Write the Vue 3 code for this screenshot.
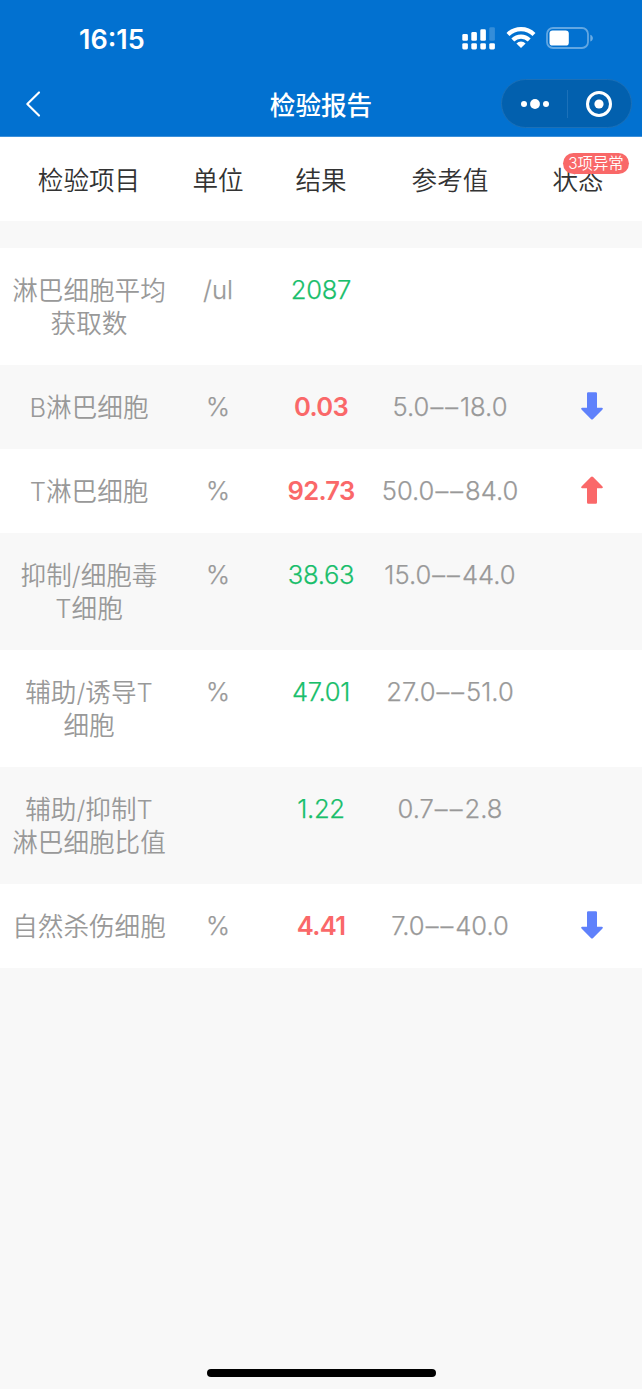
<template>
  <div class="page">
    <header class="top">
      <div class="status-bar">
        <span class="time">16:15</span>
        <div class="status-icons">
          <svg class="signal" width="34" height="24" viewBox="0 0 34 24" fill="#fff">
            <rect x="0.3" y="8" width="5.6" height="6.8" rx="1.4" />
            <rect x="9.3" y="6" width="5.6" height="8.8" rx="1.4" />
            <rect x="18.3" y="3.3" width="5.6" height="11.5" rx="1.4" />
            <rect x="27.3" y="1.2" width="5.6" height="13.6" rx="1.4" opacity="0.2" />
            <rect
              v-for="n in 4"
              :key="n"
              :x="(n - 1) * 9 + 0.3"
              y="17.2"
              width="5.6"
              height="6.2"
              rx="1.4"
            />
          </svg>
          <svg class="wifi" width="30" height="22" viewBox="0 0 30 22" fill="none" stroke="#fff" stroke-width="4.2">
            <path d="M2 8.4a18.6 18.6 0 0 1 26 0" />
            <path d="M6.8 13.9a11.8 11.8 0 0 1 16.4 0" />
            <path d="M15 22l-4.6-4.6a6.4 6.4 0 0 1 9.2 0z" fill="#fff" stroke="none" />
          </svg>
          <svg class="battery" width="48" height="23" viewBox="0 0 48 23">
            <rect x="1" y="1" width="41" height="20" rx="6" fill="none" stroke="#fff" stroke-opacity="0.38" stroke-width="1.8" />
            <rect x="3.5" y="3.4" width="19.3" height="15.2" rx="3.2" fill="#fff" />
            <path d="M44.3 7.7c3.4 1.2 3.4 5.6 0 6.8z" fill="#fff" opacity="0.42" />
          </svg>
        </div>
      </div>
      <div class="nav-bar">
        <svg class="back" width="16" height="28" viewBox="0 0 16 28" fill="none" stroke="#fff" stroke-width="2.1" stroke-linecap="round" stroke-linejoin="round">
          <path d="M14 2.4L2.3 14L14 25.6" />
        </svg>
        <h1 class="title">检验报告</h1>
        <div class="capsule">
          <svg width="30" height="12" viewBox="0 0 30 12" fill="#fff">
            <circle cx="4" cy="6" r="3" />
            <circle cx="15" cy="6" r="4.9" />
            <circle cx="26" cy="6" r="3" />
          </svg>
          <span class="divider"></span>
          <svg width="28" height="28" viewBox="0 0 28 28">
            <circle cx="14" cy="14" r="11.5" fill="none" stroke="#fff" stroke-width="3" />
            <circle cx="14" cy="14" r="4.6" fill="#fff" />
          </svg>
        </div>
      </div>
    </header>

    <div class="row head">
      <div>检验项目</div>
      <div>单位</div>
      <div>结果</div>
      <div>参考值</div>
      <div class="state-head">
        状态
        <span class="badge">3项异常</span>
      </div>
    </div>

    <div class="list">
      <div v-for="item in items" :key="item.name" class="row">
        <div class="name">{{ item.name }}</div>
        <div class="value">{{ item.unit }}</div>
        <div class="value result" :class="{ abnormal: item.state }">{{ item.result }}</div>
        <div class="value">
          <template v-if="item.low">{{ item.low }}<span class="dash">––</span>{{ item.high }}</template>
        </div>
        <div class="state">
          <svg
            v-if="item.state"
            class="arrow"
            :class="item.state"
            width="24"
            height="28"
            viewBox="0 0 24 28"
          >
            <path d="M8.2 .3h7.6q1.2 0 1.2 1.2V15.7h4.9q1.7 0.2.6 1.7L13.1 27q-1.1 1-2.2 0L1.5 17.4q-1.1-1.5.6-1.7H7V1.5Q7 .3 8.2 .3z" />
          </svg>
        </div>
      </div>
    </div>

    <div class="home-indicator"></div>
  </div>
</template>

<script setup>
import { ref } from 'vue'

const items = ref([
  { name: '淋巴细胞平均获取数', unit: '/ul', result: '2087', low: '', high: '', state: '' },
  { name: 'B淋巴细胞', unit: '%', result: '0.03', low: '5.0', high: '18.0', state: 'down' },
  { name: 'T淋巴细胞', unit: '%', result: '92.73', low: '50.0', high: '84.0', state: 'up' },
  { name: '抑制/细胞毒\nT细胞', unit: '%', result: '38.63', low: '15.0', high: '44.0', state: '' },
  { name: '辅助/诱导T\n细胞', unit: '%', result: '47.01', low: '27.0', high: '51.0', state: '' },
  { name: '辅助/抑制T\n淋巴细胞比值', unit: '', result: '1.22', low: '0.7', high: '2.8', state: '' },
  { name: '自然杀伤细胞', unit: '%', result: '4.41', low: '7.0', high: '40.0', state: 'down' }
])
</script>

<style>
body {
  background: #f8f8f8;
}
</style>

<style scoped>
.page {
  display: flex;
  flex-direction: column;
  box-sizing: border-box;
  height: 1389px;
  padding-bottom: 12px;
  background: #f8f8f8;
  font-family: Inter, "Noto Sans CJK SC", sans-serif;
  font-size: 25.6px;
  font-weight: 350;
  line-height: 33px;
}

.top {
  box-sizing: border-box;
  height: 137px;
  background: #0271d0;
  border-bottom: 1px solid #3c90da;
  color: #fff;
}

.status-bar {
  display: flex;
  justify-content: space-between;
  height: 72px;
  padding: 0 48px 0 79px;
}

.time {
  padding-top: 23px;
  font-size: 27px;
  font-weight: 600;
}

.status-icons {
  display: flex;
  align-items: flex-start;
  padding-top: 26px;
}

.wifi {
  margin-left: 10px;
}

.battery {
  margin: 1px 0 0 10px;
}

.nav-bar {
  display: grid;
  grid-template-columns: 1fr auto 1fr;
  align-items: center;
  height: 63px;
  padding: 0 10px 0 25px;
}

.title {
  margin: 3px 15px 0 0;
  font-size: 25.6px;
  font-weight: 500;
}

.capsule {
  display: flex;
  align-items: center;
  justify-content: space-between;
  justify-self: end;
  box-sizing: border-box;
  width: 131px;
  height: 49px;
  padding: 0 18px;
  background: #0260ae;
  border: 1px solid #1c70b7;
  border-radius: 25px;
}

.divider {
  width: 1px;
  height: 28px;
  background: #1c71b9;
}

.row {
  display: grid;
  grid-template-columns: 154px 104px 102px 156px 100px;
  padding: 25.48px 12px;
  background: #fff;
  color: #999;
  text-align: center;
}

.head {
  margin-bottom: 27px;
  padding-top: 26.5px;
  padding-bottom: 24.5px;
  color: #333;
}

.state-head {
  position: relative;
}

.badge {
  position: absolute;
  top: -11px;
  left: 35px;
  width: 66px;
  height: 21px;
  border-radius: 11px;
  background: #f96868;
  color: #fff;
  font-size: 15.4px;
  line-height: 22px;
  white-space: nowrap;
}

.list .row:nth-child(even) {
  background: #f8f8f8;
}

.name {
  position: relative;
  top: 1px;
  white-space: pre-line;
}

.value {
  -webkit-text-stroke: 0.25px currentColor;
}

.result {
  color: #19be6b;
  letter-spacing: -0.3px;
}

.abnormal {
  color: #fa6869;
  font-weight: 600;
  letter-spacing: -0.7px;
  -webkit-text-stroke: 0;
}

.dash {
  margin-left: 1px;
  letter-spacing: 2px;
}

.state {
  display: flex;
  justify-content: center;
  padding: 2px 0 0 28px;
  height: 28px;
}

.down {
  fill: #5f81fb;
}

.up {
  fill: #fa6869;
  transform: rotate(180deg);
}

.home-indicator {
  width: 229px;
  height: 8px;
  margin: auto auto 0;
  border-radius: 4px;
  background: #000;
}
</style>
